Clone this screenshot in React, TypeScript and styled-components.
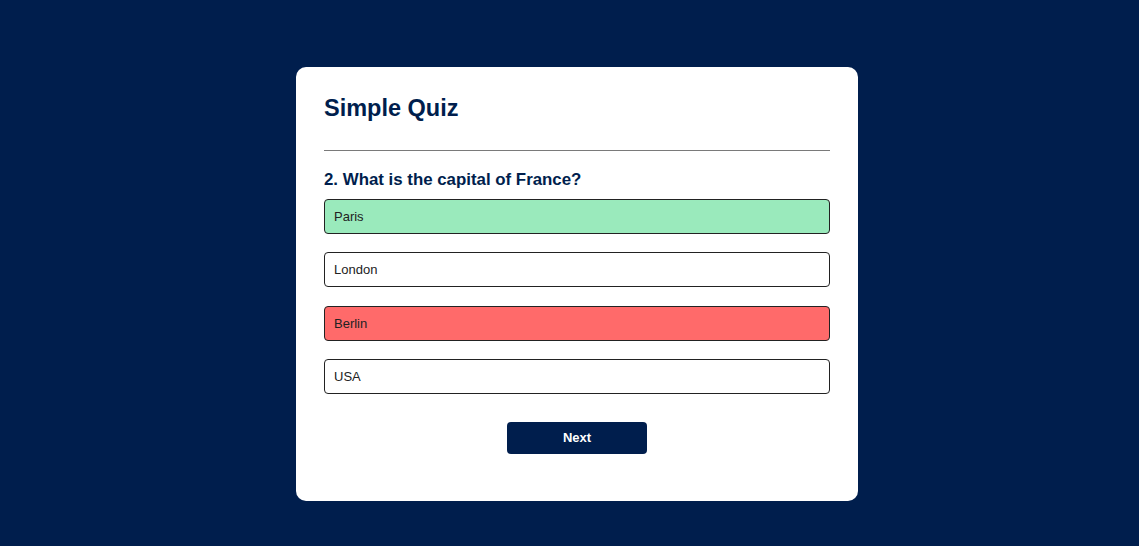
import React from "react";
import styled, { createGlobalStyle } from "styled-components";

const Global = createGlobalStyle`
  * { box-sizing: border-box; }
  html, body { margin: 0; padding: 0; }
  body {
    background: #001e4d;
    font-family: "Liberation Sans", Arial, sans-serif;
    min-height: 546px;
  }
`;

const Page = styled.div`
  display: flex;
  justify-content: center;
  padding: 67px 0 0 15px;
`;

const Card = styled.div`
  width: 562px;
  background: #fff;
  border-radius: 10px;
  padding: 27px 28px 47px;
`;

const Title = styled.h1`
  margin: 0;
  font-size: 23.5px;
  font-weight: 700;
  color: #001e4d;
  padding-bottom: 28px;
  border-bottom: 1px solid #7a7a7a;
  line-height: 28px;
`;

const Question = styled.h2`
  margin: 19px 0 9px;
  font-size: 16.85px;
  font-weight: 700;
  color: #001e4d;
  line-height: 20px;
`;

const Options = styled.div`
  display: flex;
  flex-direction: column;
  gap: 18.3px;
`;

const Option = styled.button<{ $state?: "correct" | "incorrect" }>`
  display: block;
  width: 100%;
  height: 35px;
  text-align: left;
  padding: 0 9px;
  font-family: "Liberation Sans", Arial, sans-serif;
  font-size: 13px;
  color: #222;
  border: 1px solid #222;
  border-radius: 4px;
  background: ${(p) =>
    p.$state === "correct" ? "#9aeabc" : p.$state === "incorrect" ? "#ff6a6a" : "#fff"};
`;

const NextButton = styled.button`
  display: block;
  margin: 28px auto 0;
  width: 140px;
  height: 32px;
  border: 0;
  border-radius: 4px;
  background: #001e4d;
  color: #fff;
  font-family: "Liberation Sans", Arial, sans-serif;
  font-size: 13px;
  font-weight: 700;
`;

export default function App() {
  const options: { label: string; state?: "correct" | "incorrect" }[] = [
    { label: "Paris", state: "correct" },
    { label: "London" },
    { label: "Berlin", state: "incorrect" },
    { label: "USA" },
  ];
  return (
    <>
      <Global />
      <Page>
        <Card>
          <Title>Simple Quiz</Title>
          <Question>2. What is the capital of France?</Question>
          <Options>
            {options.map((o) => (
              <Option key={o.label} $state={o.state}>
                {o.label}
              </Option>
            ))}
          </Options>
          <NextButton>Next</NextButton>
        </Card>
      </Page>
    </>
  );
}
